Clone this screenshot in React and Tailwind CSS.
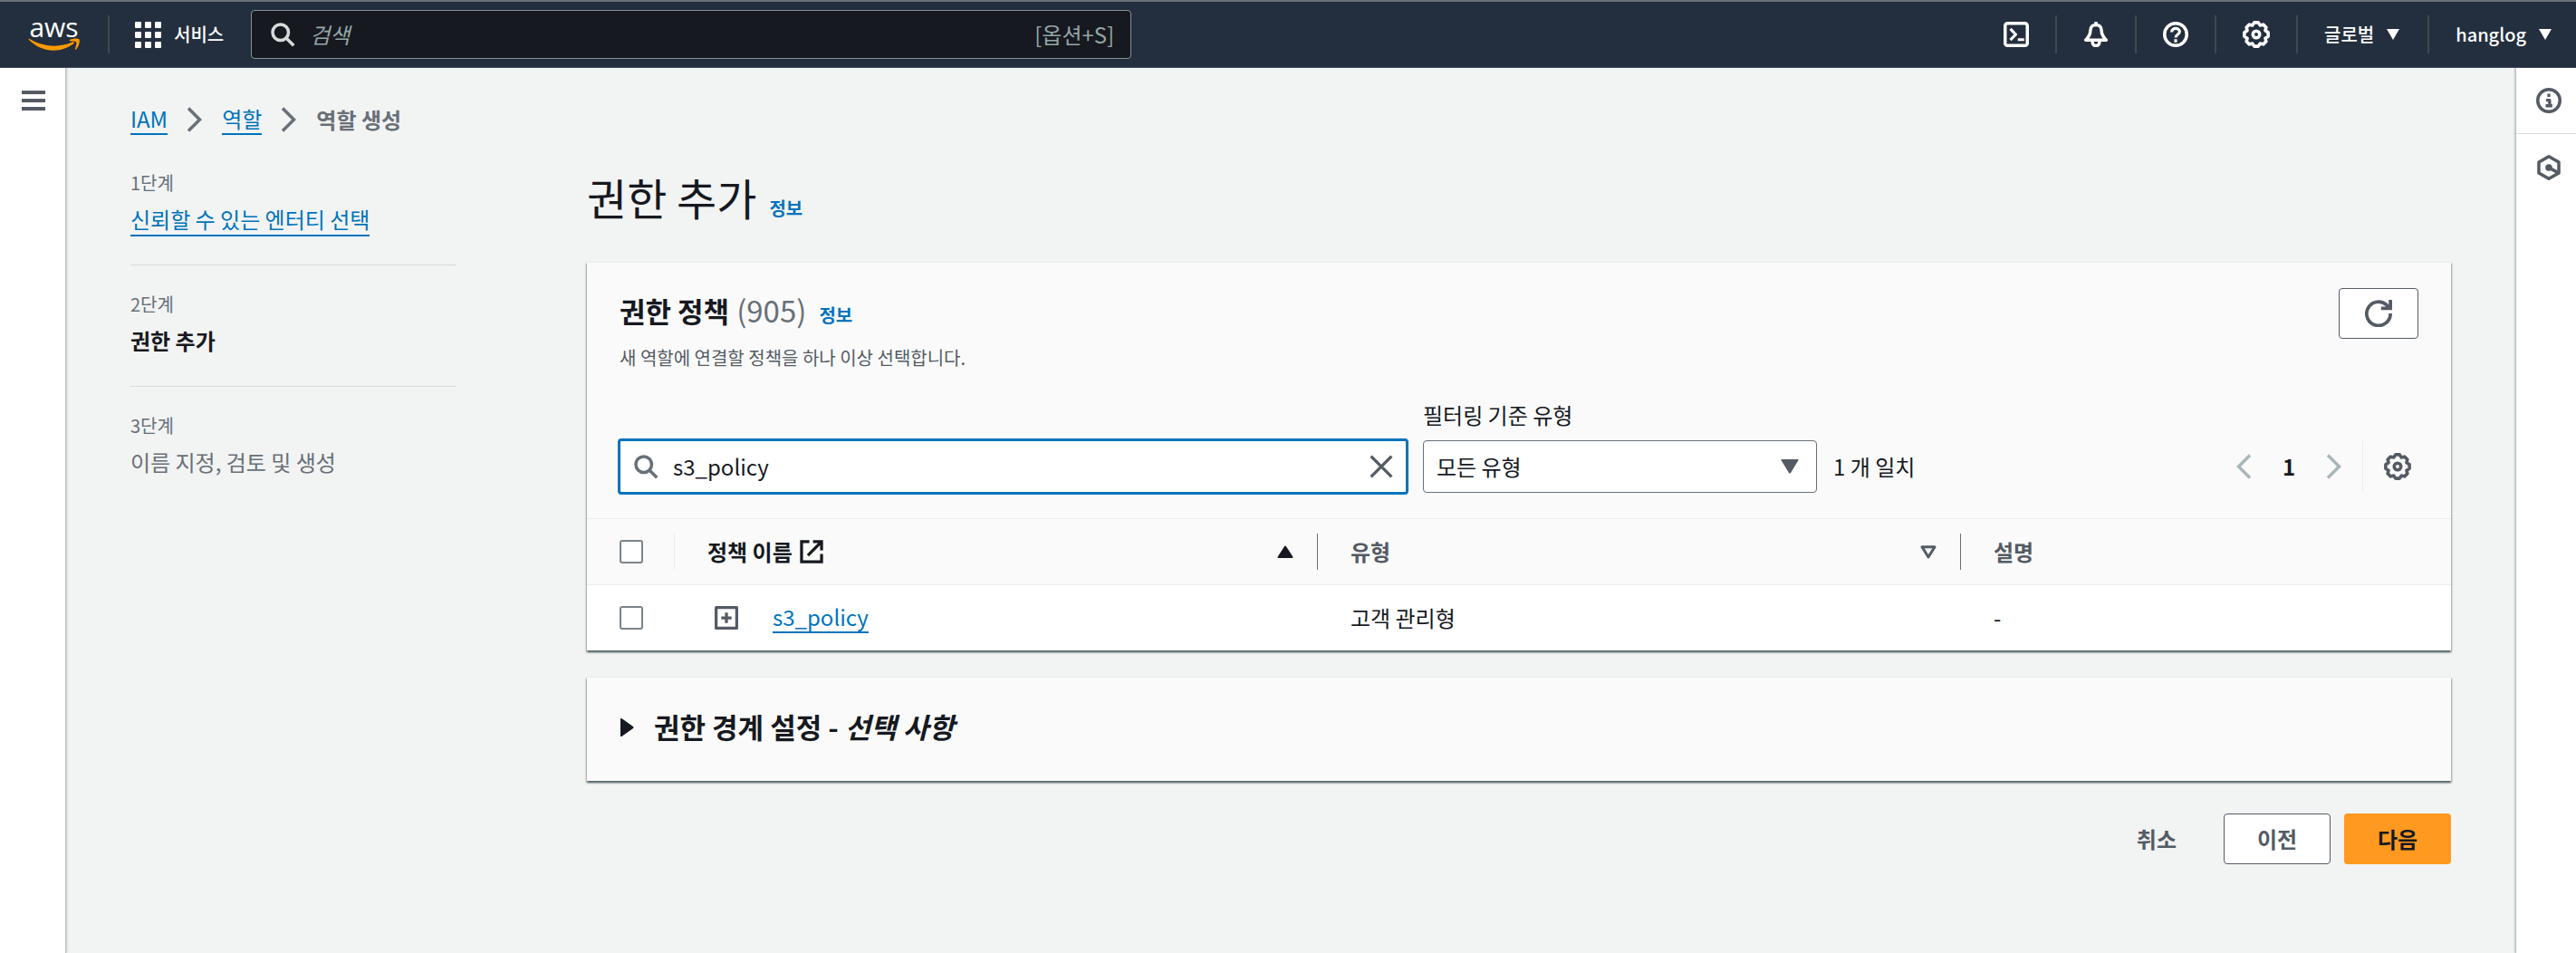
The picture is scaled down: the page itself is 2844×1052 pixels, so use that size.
import { useState } from 'react'

const STEPS = [
  { label: '1단계', title: '신뢰할 수 있는 엔터티 선택', state: 'done' },
  { label: '2단계', title: '권한 추가', state: 'current' },
  { label: '3단계', title: '이름 지정, 검토 및 생성', state: 'todo' },
]

const POLICIES = [{ name: 's3_policy', type: '고객 관리형', description: '-' }]

function Icon({ className = 'size-7', children }) {
  return (
    <svg
      viewBox="0 0 16 16"
      fill="none"
      stroke="currentColor"
      strokeWidth="2"
      strokeLinejoin="round"
      aria-hidden="true"
      className={`shrink-0 ${className}`}
    >
      {children}
    </svg>
  )
}

function SearchIcon({ className }) {
  return (
    <Icon className={className}>
      <circle cx="6.7" cy="6.7" r="5" />
      <path d="M10.4 10.4l4.6 4.6" />
    </Icon>
  )
}

function GearIcon() {
  return (
    <Icon className="size-[30px]">
      <path
        strokeWidth="1.9"
        d="M6.8 1h2.4l1.1 1.7 1.8-.5 1.7 1.7-.5 1.8L15 6.8v2.4l-1.7 1.1.5 1.8-1.7 1.7-1.8-.5L9.2 15H6.8l-1.1-1.7-1.8.5-1.7-1.7.5-1.8L1 9.2V6.8l1.7-1.1-.5-1.8 1.7-1.7 1.8.5z"
      />
      <circle cx="8" cy="8" r="2" strokeWidth="1.9" />
    </Icon>
  )
}

function ChevronIcon({ flip }) {
  return (
    <svg
      viewBox="0 0 16 28"
      fill="none"
      stroke="currentColor"
      strokeWidth="3.5"
      aria-hidden="true"
      className="h-7 w-4 shrink-0"
    >
      <path d={flip ? 'M15 1.5L2.5 14 15 26.5' : 'M1 1.5L13.5 14 1 26.5'} />
    </svg>
  )
}

function CaretDown() {
  return (
    <svg viewBox="0 0 14 12" fill="currentColor" aria-hidden="true" className="h-3 w-3.5">
      <path d="M0 0h14L7 12z" />
    </svg>
  )
}

function AwsLogo() {
  return (
    <span className="flex w-[57px] flex-col items-center text-white">
      <span className="font-['Open_Sans','Noto_Sans',sans-serif] text-[30px] leading-6 font-normal">aws</span>
      <svg viewBox="0 0 57 15" fill="#ff9900" aria-hidden="true" className="h-4 w-full">
        <path d="M1 1.5C0 1 .5 0 1.5.5 18 10 35 10 49 4c1.5-.6 2.5.8 1.2 1.8C35 17 15 15.5 1 1.5z" />
        <path d="M46 1.5C50-.5 55-.5 56.5 1c1 2-.5 8-3.5 11-.8.7-1.5.2-1.1-.7 1-2.5 2-6.3 1.3-7.3S49 2.700 46.800 3c-1 0-1.600-1-.8-1.500z" />
      </svg>
    </span>
  )
}

function Divider() {
  return <span className="h-[42px] w-0.5 bg-[#414750]" />
}

function InfoLink() {
  return (
    <a href="#info" className="text-xl leading-6 font-bold text-[#0073bb]">
      정보
    </a>
  )
}

function TopBar() {
  return (
    <header className="flex h-[75px] items-center border-t-2 border-b border-t-[#687078] border-b-[#414d5c] bg-[#232f3e] text-xl font-medium text-white">
      <a href="#home" aria-label="AWS" className="mr-[31px] ml-[31px]">
        <AwsLogo />
      </a>
      <Divider />
      <button type="button" className="ml-7 flex items-center gap-3.5">
        <svg viewBox="0 0 29 29" fill="currentColor" aria-hidden="true" className="size-[29px]">
          {[0, 11, 22].map((y) =>
            [0, 11, 22].map((x) => <rect key={`${x}-${y}`} x={x} y={y} width="7" height="7" rx="1" />),
          )}
        </svg>
        서비스
      </button>
      <label className="ml-[30px] flex h-[54px] w-[972px] items-center rounded-sm border border-[#879596] bg-[#16191f] pr-[18px] pl-5 text-2xl font-normal text-[#95a5a6]">
        <SearchIcon className="size-7 text-[#d5dbdb]" />
        <input
          type="search"
          aria-label="검색"
          placeholder="검색"
          className="ml-4 min-w-0 grow bg-transparent outline-none placeholder:text-[#95a5a6] placeholder:italic"
        />
        <span>[옵션+S]</span>
      </label>

      <div className="ml-auto flex items-center gap-[29px] pr-[27px]">
        <button type="button" aria-label="CloudShell">
          <Icon>
            <rect x="1" y="1" width="14" height="14" rx="1.5" />
            <path d="M4.3 4.5L7.7 8l-3.4 3.5M9 11.3h4" strokeWidth="1.8" />
          </Icon>
        </button>
        <Divider />
        <button type="button" aria-label="알림">
          <Icon>
            <path d="M8 0v2M8 2c-2.300 0-3.500 1.500-3.500 3.500C4.500 8 3.500 9.500 1.500 11.500h13c-2-2-3-3.500-3-6C11.500 3.500 10.300 2 8 2z" />
            <path d="M5.8 12v1a2.200 2.200 0 0 0 4.400 0v-1" />
          </Icon>
        </button>
        <Divider />
        <button type="button" aria-label="도움말">
          <Icon>
            <circle cx="8" cy="8" r="7" />
            <path d="M5.5 6.5c0-3 5-3 5-.2C10.500 8 8 8 8 10M8 11v2" strokeWidth="1.8" />
          </Icon>
        </button>
        <Divider />
        <button type="button" aria-label="설정">
          <GearIcon />
        </button>
        <Divider />
        <button type="button" className="flex items-center gap-3.5 pr-0.5">
          글로벌 <CaretDown />
        </button>
        <Divider />
        <button type="button" className="flex items-center gap-3.5">
          hanglog <CaretDown />
        </button>
      </div>
    </header>
  )
}

function Breadcrumbs() {
  return (
    <nav aria-label="breadcrumb" className="flex items-center gap-[22px] text-2xl leading-8 text-[#687078]">
      <a href="#iam" className="border-b-2 border-[#0073bb] text-[#0073bb]">
        IAM
      </a>
      <ChevronIcon />
      <a href="#roles" className="border-b-2 border-[#0073bb] text-[#0073bb]">
        역할
      </a>
      <ChevronIcon />
      <span className="font-bold">역할 생성</span>
    </nav>
  )
}

function StepTitle({ step }) {
  if (step.state === 'done') {
    return (
      <a href="#step-1" className="border-b-2 border-[#0073bb] text-[#0073bb]">
        {step.title}
      </a>
    )
  }
  if (step.state === 'current') {
    return <span className="font-bold text-[#16191f]">{step.title}</span>
  }
  return <span>{step.title}</span>
}

function Steps() {
  return (
    <ol className="w-[360px] shrink-0 divide-y divide-[#d5dbdb] text-[#687078]">
      {STEPS.map((step) => (
        <li key={step.label} className="flex h-[134px] flex-col items-start pt-[27px]">
          <span className="text-xl leading-8">{step.label}</span>
          <span className="mt-2 text-2xl leading-8">
            <StepTitle step={step} />
          </span>
        </li>
      ))}
    </ol>
  )
}

function Card({ children }) {
  return (
    <section className="border-t border-[#eaeded] bg-[#fafafa] shadow-[0_2px_2px_0_rgba(0,28,36,0.5),1px_2px_2px_0_rgba(0,28,36,0.2),-1px_2px_2px_0_rgba(0,28,36,0.2)]">
      {children}
    </section>
  )
}

function Filters() {
  const [query, setQuery] = useState('s3_policy')

  return (
    <div className="flex items-end px-[34px] pb-[26px] text-2xl">
      <div className="flex h-[62px] w-[873px] items-center rounded-sm border-[3px] border-[#0073bb] bg-white px-3.5">
        <SearchIcon className="size-7 text-[#687078]" />
        <input
          type="text"
          aria-label="정책 검색"
          value={query}
          onChange={(e) => setQuery(e.target.value)}
          className="ml-4 min-w-0 grow text-[#16191f] outline-none"
        />
        <button type="button" aria-label="지우기" onClick={() => setQuery('')} className="text-[#545b64]">
          <Icon className="size-[26px]">
            <path d="M1 1l14 14M15 1L1 15" />
          </Icon>
        </button>
      </div>

      <div className="ml-4 flex flex-col pb-0.5">
        <label htmlFor="policy-type" className="mb-3 leading-8">
          필터링 기준 유형
        </label>
        <div className="relative">
          <select
            id="policy-type"
            className="h-[58px] w-[435px] appearance-none rounded-sm border border-[#687078] bg-white px-3.5 text-[#16191f]"
          >
            <option>모든 유형</option>
          </select>
          <svg
            viewBox="0 0 20 16"
            fill="#545b64"
            aria-hidden="true"
            className="pointer-events-none absolute top-[21px] right-5 h-4 w-5"
          >
            <path d="M1 0h18q1 0 .5 1L11 15q-1 1-2 0L.5 1Q0 0 1 0z" />
          </svg>
        </div>
      </div>
      <span className="ml-[18px] flex h-[62px] items-center">1 개 일치</span>

      <div className="ml-auto flex h-[62px] items-center text-[#aab7b8]">
        <button type="button" aria-label="이전 페이지">
          <ChevronIcon flip />
        </button>
        <button type="button" aria-current="page" className="w-[84px] text-center font-bold text-[#16191f]">
          1
        </button>
        <button type="button" aria-label="다음 페이지">
          <ChevronIcon />
        </button>
        <span className="mx-[23px] h-14 w-px bg-[#eaeded]" />
        <button type="button" aria-label="기본 설정" className="mr-2.5 text-[#545b64]">
          <GearIcon />
        </button>
      </div>
    </div>
  )
}

function Checkbox({ label }) {
  return (
    <input
      type="checkbox"
      aria-label={label}
      className="block size-[26px] appearance-none rounded-[3px] border-2 border-[#7b848b] bg-white"
    />
  )
}

function PolicyTable() {
  return (
    <table className="w-full table-fixed text-left text-2xl leading-8">
      <colgroup>
        <col className="w-[97px]" />
        <col className="w-[34.5%]" />
        <col className="w-[34.5%]" />
        <col />
      </colgroup>
      <thead>
        <tr className="h-[73px] border-y border-[#eaeded] text-[#545b64]">
          <th className="p-0">
            <div className="flex h-10 items-center border-r border-[#eaeded] pl-9">
              <Checkbox label="모두 선택" />
            </div>
          </th>
          <th className="p-0 text-[#16191f]">
            <div className="flex h-10 items-center border-r border-[#687078] pr-[26px] pl-9">
              정책 이름
              <Icon className="ml-2 size-[26px]">
                <path strokeLinejoin="miter" d="M6.5 1.2H1.2v13.6h13.6V9.5M9 1.2h5.8V7M14.5 1.5l-9 9" />
              </Icon>
              <svg
                viewBox="0 0 18 14"
                fill="currentColor"
                stroke="currentColor"
                strokeWidth="2"
                strokeLinejoin="round"
                aria-hidden="true"
                className="ml-auto h-3.5 w-[18px]"
              >
                <path d="M9 1.500L16.500 13h-15z" />
              </svg>
            </div>
          </th>
          <th className="p-0">
            <div className="flex h-10 items-center border-r border-[#687078] pr-[26px] pl-9">
              유형
              <svg
                viewBox="0 0 18 15"
                fill="none"
                stroke="currentColor"
                strokeWidth="3"
                strokeLinejoin="round"
                aria-hidden="true"
                className="ml-auto h-[15px] w-[18px]"
              >
                <path d="M2 1.800h14L9 13z" />
              </svg>
            </div>
          </th>
          <th className="p-0 pl-9">설명</th>
        </tr>
      </thead>
      <tbody>
        {POLICIES.map((policy) => (
          <tr key={policy.name} className="h-[72px] bg-white">
            <td className="p-0 pl-9">
              <Checkbox label={policy.name} />
            </td>
            <td className="p-0 pl-11">
              <div className="flex items-center gap-[38px]">
                <button type="button" aria-label="펼치기" className="text-[#545b64]">
                  <Icon className="size-[26px]">
                    <rect x="1" y="1" width="14" height="14" />
                    <path d="M8 4.500v7M4.500 8h7" />
                  </Icon>
                </button>
                <a href="#s3_policy" className="border-b-2 border-[#0073bb] leading-8 text-[#0073bb]">
                  {policy.name}
                </a>
              </div>
            </td>
            <td className="p-0 pl-9">{policy.type}</td>
            <td className="p-0 pl-9">{policy.description}</td>
          </tr>
        ))}
      </tbody>
    </table>
  )
}

export default function App() {
  return (
    <div className="flex min-h-screen flex-col bg-[#f2f3f3] font-['Noto_Sans_CJK_KR',sans-serif] text-[#16191f]">
      <TopBar />
      <div className="flex grow">
        <aside className="w-[73px] shrink-0 border-r border-[#b8c0c2] bg-white pt-[23px] pl-6 shadow-[1px_0_2px_rgba(0,28,36,0.2)]">
          <button type="button" aria-label="메뉴" className="text-[#545b64]">
            <Icon className="size-[26px]">
              <path d="M0 2.5h16M0 8h16M0 13.5h16" strokeWidth="2.4" />
            </Icon>
          </button>
        </aside>

        <main className="min-w-0 grow pt-10 pr-[71px] pb-12 pl-[71px]">
          <Breadcrumbs />
          <div className="mt-2.5 flex gap-36">
            <Steps />
            <div className="min-w-0 grow">
              <div className="flex items-baseline gap-3.5 pt-[26px] pb-10">
                <h1 className="text-5xl leading-[64px]">권한 추가</h1>
                <InfoLink />
              </div>

              <Card>
                <div className="flex items-start justify-between px-9 pt-7">
                  <div className="pt-1">
                    <h2 className="flex items-baseline gap-2 text-[31px] leading-10 font-bold">
                      권한 정책
                      <span className="text-[33px] font-normal text-[#687078]">(905)</span>
                      <span className="ml-1.5 flex">
                        <InfoLink />
                      </span>
                    </h2>
                    <p className="mt-4 text-xl leading-8 text-[#545b64]">
                      새 역할에 연결할 정책을 하나 이상 선택합니다.
                    </p>
                  </div>
                  <button
                    type="button"
                    aria-label="새로 고침"
                    className="flex h-14 w-[88px] items-center justify-center rounded-sm border border-[#545b64] bg-white text-[#545b64]"
                  >
                    <Icon className="size-[30px]">
                      <path strokeLinejoin="miter" d="M15 8a7 7 0 1 1-2.6-5.300L14.500 5M15 0v5H9.500" />
                    </Icon>
                  </button>
                </div>
                <div className="mt-[31px]">
                  <Filters />
                </div>
                <PolicyTable />
              </Card>

              <div className="mt-[29px]">
                <Card>
                  <button type="button" className="flex h-[114px] w-full items-center gap-[22px] px-9 pb-1 text-[31px] font-bold">
                    <svg viewBox="0 0 16 20" fill="currentColor" aria-hidden="true" className="h-5 w-4">
                      <path d="M1 0q1-.3 2 .5l12 8.500q1 1 0 2L3 19.500q-1 .8-2 .5z" />
                    </svg>
                    <span>
                      권한 경계 설정 - <em>선택 사항</em>
                    </span>
                  </button>
                </Card>
              </div>

              <div className="mt-9 flex justify-end gap-[15px] text-2xl font-bold">
                <button type="button" className="h-14 px-[37px] text-[#545b64]">
                  취소
                </button>
                <button
                  type="button"
                  className="h-14 w-[118px] rounded-sm border border-[#545b64] bg-white text-[#545b64]"
                >
                  이전
                </button>
                <button type="button" className="h-14 w-[118px] rounded-sm bg-[#ff9920] text-[#16191f]">
                  다음
                </button>
              </div>
            </div>
          </div>
        </main>

        <aside className="flex w-[67px] shrink-0 flex-col border-l border-[#b8c0c2] bg-white text-[#545b64] shadow-[-1px_0_2px_rgba(0,28,36,0.2)]">
          <button type="button" aria-label="정보" className="flex h-[73px] items-center justify-center border-b border-[#d5dbdb] pl-1.5">
            <Icon>
              <circle cx="8" cy="8" r="7" />
              <path d="M8 3.7v2M6.3 7.8h2.200v3.500M6 11.300h4.200" strokeWidth="1.9" />
            </Icon>
          </button>
          <button type="button" aria-label="리소스" className="flex h-[73px] items-center justify-center pl-1.5">
            <Icon>
              <path d="M8 1l6.3 3.600v6.800L8 15l-6.300-3.600V4.600z" />
              <circle cx="8" cy="8" r="1.2" fill="currentColor" />
              <path d="M8 8l5.800 3.200" />
            </Icon>
          </button>
        </aside>
      </div>
    </div>
  )
}
